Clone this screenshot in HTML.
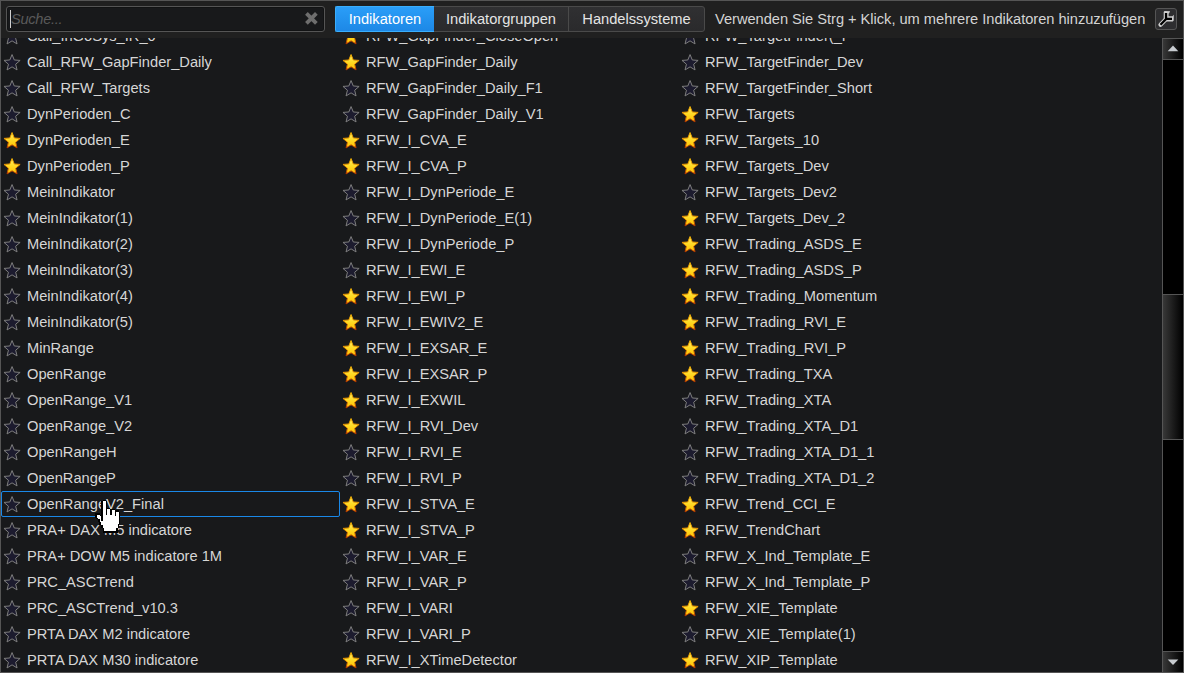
<!DOCTYPE html>
<html><head><meta charset="utf-8">
<style>
html,body{margin:0;padding:0;}
body{width:1184px;height:673px;overflow:hidden;background:#18191b;font-family:"Liberation Sans",sans-serif;font-size:11pt;position:relative;}
#frame{position:absolute;left:0;top:0;width:1184px;height:673px;box-sizing:border-box;border:1px solid #555;}
#bar{position:absolute;left:1px;top:1px;width:1182px;height:37px;background:#202020;}
#search{position:absolute;left:5px;top:5px;width:319px;height:26px;box-sizing:border-box;border:1px solid #555;border-radius:3px;background:#18191b;box-shadow:inset 0 0 0 1px #121314;}
#search .ph{position:absolute;left:4px;top:4px;line-height:17px;font-style:italic;color:#5a5a5a;letter-spacing:-0.3px;}
#search .caret{position:absolute;left:3px;top:3px;width:1px;height:18px;background:#d0d0d0;}
#search .x{position:absolute;left:296px;top:3px;}
#tabs{position:absolute;left:334px;top:5px;height:26px;}
.tab{position:absolute;top:0;height:26px;box-sizing:border-box;line-height:24px;text-align:center;color:#e4e4e4;border:1px solid #4a4a4a;background:linear-gradient(#303032,#2a2a2c);}
.tab.t1{left:0;width:100px;background:linear-gradient(#2a9ef8,#1d88e6);border-color:#3aaefc;border-right-color:#3ab4ff;color:#fff;border-radius:2px 0 0 2px;}
.tab.t2{left:99px;width:135px;border-left:none;}
.tab.t3{left:233px;width:137px;border-radius:0 3px 3px 0;}
#hint{position:absolute;left:714px;top:5px;line-height:26px;color:#d4d4d4;white-space:pre;letter-spacing:-0.03px;}
#wrench{position:absolute;left:1154px;top:7px;width:22px;height:22px;box-sizing:border-box;border:1px solid #555;border-radius:3px;background:#2e2e30;}
#list{position:absolute;left:1px;top:38px;width:1161px;height:634px;overflow:hidden;background:#18191b;}
.r{position:absolute;width:339px;height:26px;line-height:26px;color:#d6d6d6;white-space:pre;box-sizing:border-box;}
.r span{position:absolute;left:26px;top:0;}
.r .st{position:absolute;left:0;top:0;width:26px;height:26px;}
.r.sel{border:1px solid #1a88e8;border-radius:2px;}
.r.sel span{left:25px;top:-1px;}
.r.sel .st{left:-1px;top:-1px;}
#sb{position:absolute;left:1162px;top:38px;width:21px;height:634px;background:#000;box-sizing:border-box;border-left:1px solid #555;}
.sbtn{position:absolute;left:0;width:20px;height:21px;box-sizing:border-box;border-top:1px solid #555;border-bottom:1px solid #555;background:linear-gradient(90deg,#383838,#000);}
#thumb{position:absolute;left:0;top:256px;width:20px;height:146px;box-sizing:border-box;border-top:1px solid #555;border-bottom:1px solid #555;background:linear-gradient(90deg,#383838,#000);}
</style></head>
<body>
<svg width="0" height="0" style="position:absolute">
<defs>
<linearGradient id="gg" x1="0" y1="0" x2="0" y2="1">
<stop offset="0" stop-color="#fff070"/><stop offset="0.45" stop-color="#ffdc28"/><stop offset="1" stop-color="#ffc000"/>
</linearGradient>
<linearGradient id="gs" x1="0" y1="0" x2="0" y2="1">
<stop offset="0" stop-color="#f0b000"/><stop offset="0.6" stop-color="#e08000"/><stop offset="1" stop-color="#b03000"/>
</linearGradient>
<path id="stp" d="M11.05,5.55 L13.28,10.98 L19.13,11.42 L14.66,15.22 L16.05,20.93 L11.05,17.85 L6.05,20.93 L7.44,15.22 L2.97,11.42 L8.82,10.98 Z"/>
<g id="sg"><use href="#stp" fill="url(#gg)" stroke="url(#gs)" stroke-width="1" stroke-linejoin="round"/></g>
<g id="se"><use href="#stp" fill="#1c1b2e" stroke="#7e7e7e" stroke-width="1" stroke-linejoin="round"/></g>
</defs>
</svg>
<div id="list">
<div class="r" style="left:0px;top:-15px"><svg class="st"><use href="#se"/></svg><span>Call_InGoSys_IR_0</span></div>
<div class="r" style="left:0px;top:11px"><svg class="st"><use href="#se"/></svg><span>Call_RFW_GapFinder_Daily</span></div>
<div class="r" style="left:0px;top:37px"><svg class="st"><use href="#se"/></svg><span>Call_RFW_Targets</span></div>
<div class="r" style="left:0px;top:63px"><svg class="st"><use href="#se"/></svg><span>DynPerioden_C</span></div>
<div class="r" style="left:0px;top:89px"><svg class="st"><use href="#sg"/></svg><span>DynPerioden_E</span></div>
<div class="r" style="left:0px;top:115px"><svg class="st"><use href="#sg"/></svg><span>DynPerioden_P</span></div>
<div class="r" style="left:0px;top:141px"><svg class="st"><use href="#se"/></svg><span>MeinIndikator</span></div>
<div class="r" style="left:0px;top:167px"><svg class="st"><use href="#se"/></svg><span>MeinIndikator(1)</span></div>
<div class="r" style="left:0px;top:193px"><svg class="st"><use href="#se"/></svg><span>MeinIndikator(2)</span></div>
<div class="r" style="left:0px;top:219px"><svg class="st"><use href="#se"/></svg><span>MeinIndikator(3)</span></div>
<div class="r" style="left:0px;top:245px"><svg class="st"><use href="#se"/></svg><span>MeinIndikator(4)</span></div>
<div class="r" style="left:0px;top:271px"><svg class="st"><use href="#se"/></svg><span>MeinIndikator(5)</span></div>
<div class="r" style="left:0px;top:297px"><svg class="st"><use href="#se"/></svg><span>MinRange</span></div>
<div class="r" style="left:0px;top:323px"><svg class="st"><use href="#se"/></svg><span>OpenRange</span></div>
<div class="r" style="left:0px;top:349px"><svg class="st"><use href="#se"/></svg><span>OpenRange_V1</span></div>
<div class="r" style="left:0px;top:375px"><svg class="st"><use href="#se"/></svg><span>OpenRange_V2</span></div>
<div class="r" style="left:0px;top:401px"><svg class="st"><use href="#se"/></svg><span>OpenRangeH</span></div>
<div class="r" style="left:0px;top:427px"><svg class="st"><use href="#se"/></svg><span>OpenRangeP</span></div>
<div class="r sel" style="left:0px;top:453px"><svg class="st"><use href="#se"/></svg><span>OpenRangeV2_Final</span></div>
<div class="r" style="left:0px;top:479px"><svg class="st"><use href="#se"/></svg><span>PRA+ DAX M5 indicatore</span></div>
<div class="r" style="left:0px;top:505px"><svg class="st"><use href="#se"/></svg><span>PRA+ DOW M5 indicatore 1M</span></div>
<div class="r" style="left:0px;top:531px"><svg class="st"><use href="#se"/></svg><span>PRC_ASCTrend</span></div>
<div class="r" style="left:0px;top:557px"><svg class="st"><use href="#se"/></svg><span>PRC_ASCTrend_v10.3</span></div>
<div class="r" style="left:0px;top:583px"><svg class="st"><use href="#se"/></svg><span>PRTA DAX M2 indicatore</span></div>
<div class="r" style="left:0px;top:609px"><svg class="st"><use href="#se"/></svg><span>PRTA DAX M30 indicatore</span></div>
<div class="r" style="left:339px;top:-15px"><svg class="st"><use href="#sg"/></svg><span>RFW_GapFinder_CloseOpen</span></div>
<div class="r" style="left:339px;top:11px"><svg class="st"><use href="#sg"/></svg><span>RFW_GapFinder_Daily</span></div>
<div class="r" style="left:339px;top:37px"><svg class="st"><use href="#se"/></svg><span>RFW_GapFinder_Daily_F1</span></div>
<div class="r" style="left:339px;top:63px"><svg class="st"><use href="#se"/></svg><span>RFW_GapFinder_Daily_V1</span></div>
<div class="r" style="left:339px;top:89px"><svg class="st"><use href="#sg"/></svg><span>RFW_I_CVA_E</span></div>
<div class="r" style="left:339px;top:115px"><svg class="st"><use href="#sg"/></svg><span>RFW_I_CVA_P</span></div>
<div class="r" style="left:339px;top:141px"><svg class="st"><use href="#se"/></svg><span>RFW_I_DynPeriode_E</span></div>
<div class="r" style="left:339px;top:167px"><svg class="st"><use href="#se"/></svg><span>RFW_I_DynPeriode_E(1)</span></div>
<div class="r" style="left:339px;top:193px"><svg class="st"><use href="#se"/></svg><span>RFW_I_DynPeriode_P</span></div>
<div class="r" style="left:339px;top:219px"><svg class="st"><use href="#se"/></svg><span>RFW_I_EWI_E</span></div>
<div class="r" style="left:339px;top:245px"><svg class="st"><use href="#sg"/></svg><span>RFW_I_EWI_P</span></div>
<div class="r" style="left:339px;top:271px"><svg class="st"><use href="#sg"/></svg><span>RFW_I_EWIV2_E</span></div>
<div class="r" style="left:339px;top:297px"><svg class="st"><use href="#sg"/></svg><span>RFW_I_EXSAR_E</span></div>
<div class="r" style="left:339px;top:323px"><svg class="st"><use href="#sg"/></svg><span>RFW_I_EXSAR_P</span></div>
<div class="r" style="left:339px;top:349px"><svg class="st"><use href="#sg"/></svg><span>RFW_I_EXWIL</span></div>
<div class="r" style="left:339px;top:375px"><svg class="st"><use href="#sg"/></svg><span>RFW_I_RVI_Dev</span></div>
<div class="r" style="left:339px;top:401px"><svg class="st"><use href="#se"/></svg><span>RFW_I_RVI_E</span></div>
<div class="r" style="left:339px;top:427px"><svg class="st"><use href="#se"/></svg><span>RFW_I_RVI_P</span></div>
<div class="r" style="left:339px;top:453px"><svg class="st"><use href="#sg"/></svg><span>RFW_I_STVA_E</span></div>
<div class="r" style="left:339px;top:479px"><svg class="st"><use href="#sg"/></svg><span>RFW_I_STVA_P</span></div>
<div class="r" style="left:339px;top:505px"><svg class="st"><use href="#se"/></svg><span>RFW_I_VAR_E</span></div>
<div class="r" style="left:339px;top:531px"><svg class="st"><use href="#se"/></svg><span>RFW_I_VAR_P</span></div>
<div class="r" style="left:339px;top:557px"><svg class="st"><use href="#se"/></svg><span>RFW_I_VARI</span></div>
<div class="r" style="left:339px;top:583px"><svg class="st"><use href="#se"/></svg><span>RFW_I_VARI_P</span></div>
<div class="r" style="left:339px;top:609px"><svg class="st"><use href="#sg"/></svg><span>RFW_I_XTimeDetector</span></div>
<div class="r" style="left:678px;top:-15px"><svg class="st"><use href="#se"/></svg><span>RFW_TargetFinder(_P</span></div>
<div class="r" style="left:678px;top:11px"><svg class="st"><use href="#se"/></svg><span>RFW_TargetFinder_Dev</span></div>
<div class="r" style="left:678px;top:37px"><svg class="st"><use href="#se"/></svg><span>RFW_TargetFinder_Short</span></div>
<div class="r" style="left:678px;top:63px"><svg class="st"><use href="#sg"/></svg><span>RFW_Targets</span></div>
<div class="r" style="left:678px;top:89px"><svg class="st"><use href="#sg"/></svg><span>RFW_Targets_10</span></div>
<div class="r" style="left:678px;top:115px"><svg class="st"><use href="#sg"/></svg><span>RFW_Targets_Dev</span></div>
<div class="r" style="left:678px;top:141px"><svg class="st"><use href="#se"/></svg><span>RFW_Targets_Dev2</span></div>
<div class="r" style="left:678px;top:167px"><svg class="st"><use href="#sg"/></svg><span>RFW_Targets_Dev_2</span></div>
<div class="r" style="left:678px;top:193px"><svg class="st"><use href="#sg"/></svg><span>RFW_Trading_ASDS_E</span></div>
<div class="r" style="left:678px;top:219px"><svg class="st"><use href="#sg"/></svg><span>RFW_Trading_ASDS_P</span></div>
<div class="r" style="left:678px;top:245px"><svg class="st"><use href="#sg"/></svg><span>RFW_Trading_Momentum</span></div>
<div class="r" style="left:678px;top:271px"><svg class="st"><use href="#sg"/></svg><span>RFW_Trading_RVI_E</span></div>
<div class="r" style="left:678px;top:297px"><svg class="st"><use href="#sg"/></svg><span>RFW_Trading_RVI_P</span></div>
<div class="r" style="left:678px;top:323px"><svg class="st"><use href="#sg"/></svg><span>RFW_Trading_TXA</span></div>
<div class="r" style="left:678px;top:349px"><svg class="st"><use href="#se"/></svg><span>RFW_Trading_XTA</span></div>
<div class="r" style="left:678px;top:375px"><svg class="st"><use href="#se"/></svg><span>RFW_Trading_XTA_D1</span></div>
<div class="r" style="left:678px;top:401px"><svg class="st"><use href="#se"/></svg><span>RFW_Trading_XTA_D1_1</span></div>
<div class="r" style="left:678px;top:427px"><svg class="st"><use href="#se"/></svg><span>RFW_Trading_XTA_D1_2</span></div>
<div class="r" style="left:678px;top:453px"><svg class="st"><use href="#sg"/></svg><span>RFW_Trend_CCI_E</span></div>
<div class="r" style="left:678px;top:479px"><svg class="st"><use href="#sg"/></svg><span>RFW_TrendChart</span></div>
<div class="r" style="left:678px;top:505px"><svg class="st"><use href="#se"/></svg><span>RFW_X_Ind_Template_E</span></div>
<div class="r" style="left:678px;top:531px"><svg class="st"><use href="#se"/></svg><span>RFW_X_Ind_Template_P</span></div>
<div class="r" style="left:678px;top:557px"><svg class="st"><use href="#sg"/></svg><span>RFW_XIE_Template</span></div>
<div class="r" style="left:678px;top:583px"><svg class="st"><use href="#se"/></svg><span>RFW_XIE_Template(1)</span></div>
<div class="r" style="left:678px;top:609px"><svg class="st"><use href="#sg"/></svg><span>RFW_XIP_Template</span></div>
</div>
<div id="bar">
  <div id="search">
    <div class="caret"></div>
    <div class="ph">Suche...</div>
    <svg class="x" width="18" height="18" viewBox="0 0 18 18"><path d="M3.44,3.44 L13.36,13.36 M13.36,3.44 L3.44,13.36" stroke="#6e6e6e" stroke-width="3.8"/></svg>
  </div>
  <div id="tabs">
    <div class="tab t1">Indikatoren</div>
    <div class="tab t2">Indikatorgruppen</div>
    <div class="tab t3">Handelssysteme</div>
  </div>
  <div id="hint">Verwenden Sie Strg + Klick, um mehrere Indikatoren hinzuzufügen</div>
  <div id="wrench">
    <svg width="20" height="20" viewBox="0 0 20 20" style="position:absolute;left:0;top:0">
      <path d="M4.5,15.7 L10.05,10.1" stroke="#d4d4d4" stroke-width="4.2" stroke-linecap="round"/>
      <path d="M7.7,12 L7.7,3.1 L8.5,2.1 L14.1,2.2 L13.1,4.3 L12.6,4.6 L12.6,7.3 L16.4,7.3 L17.8,5.8 L17.7,11.4 L16.8,12.4 L10.4,12.6 Z" fill="#cfcfcf"/>
      <path d="M4.5,15.7 L10.05,10.1 L10.05,3.9 M10.05,9.8 L16,9.8" fill="none" stroke="#000" stroke-width="2.3"/>
    </svg>
  </div>
</div>
<div id="sb">
  <div class="sbtn" style="top:0;height:22px"><svg width="20" height="20" style="position:absolute;left:0;top:0"><path d="M4.7,12.25 L10,6.6 L15.3,12.25 Z" fill="#c8ccd0"/></svg></div>
  <div id="thumb"></div>
  <div class="sbtn" style="top:613px;height:21px;border-bottom:none"><svg width="20" height="20" style="position:absolute;left:0;top:0"><path d="M4.7,7.5 L10,13 L15.3,7.5 Z" fill="#c8ccd0"/></svg></div>
</div>
<div id="frame"></div>
<svg id="cur" width="26" height="34" style="position:absolute;left:95px;top:499px" shape-rendering="crispEdges"><rect x="8" y="1" width="3" height="1" fill="#000"/><rect x="6" y="2" width="2" height="1" fill="#000"/><rect x="11" y="2" width="1" height="1" fill="#000"/><rect x="6" y="3" width="2" height="1" fill="#000"/><rect x="11" y="3" width="1" height="1" fill="#000"/><rect x="6" y="4" width="2" height="1" fill="#000"/><rect x="11" y="4" width="1" height="1" fill="#000"/><rect x="6" y="5" width="2" height="1" fill="#000"/><rect x="11" y="5" width="1" height="1" fill="#000"/><rect x="6" y="6" width="2" height="1" fill="#000"/><rect x="11" y="6" width="1" height="1" fill="#000"/><rect x="6" y="7" width="2" height="1" fill="#000"/><rect x="11" y="7" width="1" height="1" fill="#000"/><rect x="6" y="8" width="2" height="1" fill="#000"/><rect x="11" y="8" width="1" height="1" fill="#000"/><rect x="6" y="9" width="2" height="1" fill="#000"/><rect x="11" y="9" width="4" height="1" fill="#000"/><rect x="6" y="10" width="2" height="1" fill="#000"/><rect x="11" y="10" width="1" height="1" fill="#000"/><rect x="15" y="10" width="5" height="1" fill="#000"/><rect x="6" y="11" width="2" height="1" fill="#000"/><rect x="11" y="11" width="1" height="1" fill="#000"/><rect x="15" y="11" width="2" height="1" fill="#000"/><rect x="20" y="11" width="4" height="1" fill="#000"/><rect x="6" y="12" width="2" height="1" fill="#000"/><rect x="11" y="12" width="1" height="1" fill="#000"/><rect x="15" y="12" width="2" height="1" fill="#000"/><rect x="20" y="12" width="4" height="1" fill="#000"/><rect x="6" y="13" width="2" height="1" fill="#000"/><rect x="11" y="13" width="1" height="1" fill="#000"/><rect x="15" y="13" width="2" height="1" fill="#000"/><rect x="20" y="13" width="1" height="1" fill="#000"/><rect x="24" y="13" width="1" height="1" fill="#000"/><rect x="0" y="14" width="5" height="1" fill="#000"/><rect x="6" y="14" width="2" height="1" fill="#000"/><rect x="11" y="14" width="1" height="1" fill="#000"/><rect x="15" y="14" width="2" height="1" fill="#000"/><rect x="20" y="14" width="1" height="1" fill="#000"/><rect x="24" y="14" width="1" height="1" fill="#000"/><rect x="0" y="15" width="5" height="1" fill="#000"/><rect x="6" y="15" width="2" height="1" fill="#000"/><rect x="11" y="15" width="1" height="1" fill="#000"/><rect x="15" y="15" width="2" height="1" fill="#000"/><rect x="20" y="15" width="1" height="1" fill="#000"/><rect x="24" y="15" width="1" height="1" fill="#000"/><rect x="0" y="16" width="2" height="1" fill="#000"/><rect x="5" y="16" width="3" height="1" fill="#000"/><rect x="20" y="16" width="1" height="1" fill="#000"/><rect x="24" y="16" width="1" height="1" fill="#000"/><rect x="0" y="17" width="2" height="1" fill="#000"/><rect x="6" y="17" width="2" height="1" fill="#000"/><rect x="24" y="17" width="1" height="1" fill="#000"/><rect x="0" y="18" width="2" height="1" fill="#000"/><rect x="6" y="18" width="2" height="1" fill="#000"/><rect x="24" y="18" width="1" height="1" fill="#000"/><rect x="1" y="19" width="2" height="1" fill="#000"/><rect x="6" y="19" width="2" height="1" fill="#000"/><rect x="24" y="19" width="1" height="1" fill="#000"/><rect x="3" y="20" width="2" height="1" fill="#000"/><rect x="6" y="20" width="2" height="1" fill="#000"/><rect x="24" y="20" width="1" height="1" fill="#000"/><rect x="3" y="21" width="2" height="1" fill="#000"/><rect x="6" y="21" width="2" height="1" fill="#000"/><rect x="24" y="21" width="1" height="1" fill="#000"/><rect x="3" y="22" width="2" height="1" fill="#000"/><rect x="24" y="22" width="1" height="1" fill="#000"/><rect x="4" y="23" width="2" height="1" fill="#000"/><rect x="24" y="23" width="1" height="1" fill="#000"/><rect x="4" y="24" width="2" height="1" fill="#000"/><rect x="24" y="24" width="1" height="1" fill="#000"/><rect x="4" y="25" width="2" height="1" fill="#000"/><rect x="23" y="25" width="1" height="1" fill="#000"/><rect x="6" y="26" width="2" height="1" fill="#000"/><rect x="23" y="26" width="1" height="1" fill="#000"/><rect x="6" y="27" width="2" height="1" fill="#000"/><rect x="23" y="27" width="1" height="1" fill="#000"/><rect x="6" y="28" width="2" height="1" fill="#000"/><rect x="23" y="28" width="1" height="1" fill="#000"/><rect x="8" y="29" width="1" height="1" fill="#000"/><rect x="21" y="29" width="2" height="1" fill="#000"/><rect x="8" y="30" width="1" height="1" fill="#000"/><rect x="21" y="30" width="2" height="1" fill="#000"/><rect x="8" y="31" width="1" height="1" fill="#000"/><rect x="21" y="31" width="2" height="1" fill="#000"/><rect x="8" y="32" width="15" height="1" fill="#000"/><rect x="8" y="33" width="15" height="1" fill="#000"/><rect x="8" y="2" width="3" height="1" fill="#fff"/><rect x="8" y="3" width="3" height="1" fill="#fff"/><rect x="8" y="4" width="3" height="1" fill="#fff"/><rect x="8" y="5" width="3" height="1" fill="#fff"/><rect x="8" y="6" width="3" height="1" fill="#fff"/><rect x="8" y="7" width="3" height="1" fill="#fff"/><rect x="8" y="8" width="3" height="1" fill="#fff"/><rect x="8" y="9" width="3" height="1" fill="#fff"/><rect x="8" y="10" width="3" height="1" fill="#fff"/><rect x="12" y="10" width="3" height="1" fill="#fff"/><rect x="8" y="11" width="3" height="1" fill="#fff"/><rect x="12" y="11" width="3" height="1" fill="#fff"/><rect x="17" y="11" width="3" height="1" fill="#fff"/><rect x="8" y="12" width="3" height="1" fill="#fff"/><rect x="12" y="12" width="3" height="1" fill="#fff"/><rect x="17" y="12" width="3" height="1" fill="#fff"/><rect x="8" y="13" width="3" height="1" fill="#fff"/><rect x="12" y="13" width="3" height="1" fill="#fff"/><rect x="17" y="13" width="3" height="1" fill="#fff"/><rect x="21" y="13" width="3" height="1" fill="#fff"/><rect x="8" y="14" width="3" height="1" fill="#fff"/><rect x="12" y="14" width="3" height="1" fill="#fff"/><rect x="17" y="14" width="3" height="1" fill="#fff"/><rect x="21" y="14" width="3" height="1" fill="#fff"/><rect x="8" y="15" width="3" height="1" fill="#fff"/><rect x="12" y="15" width="3" height="1" fill="#fff"/><rect x="17" y="15" width="3" height="1" fill="#fff"/><rect x="21" y="15" width="3" height="1" fill="#fff"/><rect x="2" y="16" width="3" height="1" fill="#fff"/><rect x="8" y="16" width="12" height="1" fill="#fff"/><rect x="21" y="16" width="3" height="1" fill="#fff"/><rect x="2" y="17" width="4" height="1" fill="#fff"/><rect x="8" y="17" width="16" height="1" fill="#fff"/><rect x="2" y="18" width="4" height="1" fill="#fff"/><rect x="8" y="18" width="16" height="1" fill="#fff"/><rect x="3" y="19" width="3" height="1" fill="#fff"/><rect x="8" y="19" width="16" height="1" fill="#fff"/><rect x="5" y="20" width="1" height="1" fill="#fff"/><rect x="8" y="20" width="16" height="1" fill="#fff"/><rect x="5" y="21" width="1" height="1" fill="#fff"/><rect x="8" y="21" width="16" height="1" fill="#fff"/><rect x="5" y="22" width="19" height="1" fill="#fff"/><rect x="6" y="23" width="18" height="1" fill="#fff"/><rect x="6" y="24" width="18" height="1" fill="#fff"/><rect x="6" y="25" width="17" height="1" fill="#fff"/><rect x="8" y="26" width="15" height="1" fill="#fff"/><rect x="8" y="27" width="15" height="1" fill="#fff"/><rect x="8" y="28" width="15" height="1" fill="#fff"/><rect x="9" y="29" width="12" height="1" fill="#fff"/><rect x="9" y="30" width="12" height="1" fill="#fff"/><rect x="9" y="31" width="12" height="1" fill="#fff"/></svg>
</body></html>
